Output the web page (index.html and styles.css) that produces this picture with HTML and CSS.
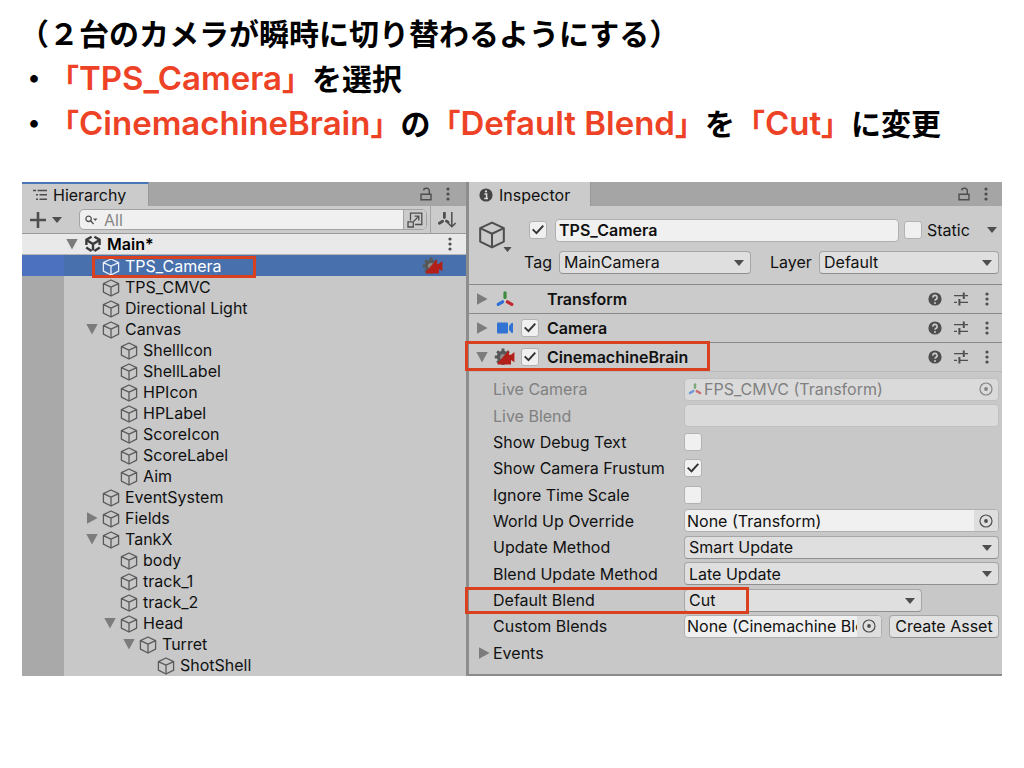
FILE: index.html
```html
<!DOCTYPE html>
<html lang="ja">
<head>
<meta charset="utf-8">
<meta name="viewport" content="width=device-width, initial-scale=1">
<title>TPS_Camera</title>
<link rel="stylesheet" href="styles.css">
</head>
<body>
<svg class="sprite" aria-hidden="true">
  <symbol id="cube" viewBox="0 0 18 18"><path d="M9 1 16.6 4.6V13.2L9 17 1.4 13.2V4.6ZM1.4 4.6 9 8.2 16.6 4.6M9 8.2V17" fill="none" stroke="currentColor" stroke-width="1.3" stroke-linejoin="round"/></symbol>
  <symbol id="down" viewBox="0 0 12 12"><path d="M.3 1H11.7L6 11.6Z" fill="currentColor"/></symbol>
  <symbol id="right" viewBox="0 0 12 12"><path d="M1 .3V11.7L11.6 6Z" fill="currentColor"/></symbol>
  <symbol id="caret" viewBox="0 0 10 6"><path d="M0 0H10L5 6Z" fill="currentColor"/></symbol>
  <symbol id="dots" viewBox="0 0 4 14"><circle cx="2" cy="2" r="1.6"/><circle cx="2" cy="7" r="1.6"/><circle cx="2" cy="12" r="1.6"/></symbol>
  <symbol id="lock" viewBox="0 0 12 14"><path d="M1 7.2H11V12.8H1ZM9.3 7V3.6A2.4 2.4 0 0 0 6.9 1.2H6A2.4 2.4 0 0 0 3.6 3.4" fill="none" stroke="currentColor" stroke-width="1.4"/></symbol>
  <symbol id="help" viewBox="0 0 14 14"><circle cx="7" cy="7" r="6.6" fill="currentColor"/><path d="M4.9 5.6A2.1 2.1 0 1 1 7.8 7.4Q7 7.8 7 8.8" fill="none" stroke="#cbcbcb" stroke-width="1.6"/><circle cx="7" cy="10.9" r="1" fill="#cbcbcb"/></symbol>
  <symbol id="preset" viewBox="0 0 14 14"><path d="M0 3.7H9M11 3.7H14M0 10.3H3M5 10.3H14" stroke="currentColor" stroke-width="1.3"/><path d="M9.8 .5V6.9M5.4 7.1V13.5" stroke="currentColor" stroke-width="2"/></symbol>
  <symbol id="axes" viewBox="0 0 18 16"><g stroke-width="3.2" stroke-linecap="round"><path d="M9 1.8V6.4" stroke="#3b8a3d"/><path d="M6.6 10.8 2.2 13.4" stroke="#2f6fd8"/><path d="M11.4 10.8 15.8 13.4" stroke="#c3272b"/></g></symbol>
  <symbol id="brain" viewBox="0 0 22 18"><g fill="#575757"><circle cx="9" cy="9" r="6.2"/><g stroke="#575757" stroke-width="3"><path d="M9 .6V17M.8 9H17M3.2 3.2 14.8 14.8M14.8 3.2 3.2 14.8"/></g></g><circle cx="9" cy="9" r="3" fill="#8a8a8a"/><path d="M3.6 16.6V15L15 2.2V6.8H17L20.4 4V14.2L17 12V16.6Z" fill="#b3201a"/></symbol>
  <symbol id="target" viewBox="0 0 14 14"><circle cx="7" cy="7" r="6" fill="none" stroke="currentColor" stroke-width="1.2"/><circle cx="7" cy="7" r="1.9" fill="currentColor"/></symbol>
</svg>

<header class="notes">
  <p>（２台のカメラが瞬時に切り替わるようにする）</p>
  <p>・<em>「<b>TPS_Camera</b>」</em>を選択</p>
  <p>・<em>「<b>CinemachineBrain</b>」</em>の<em>「<b>Default Blend</b>」</em>を<em>「<b>Cut</b>」</em>に変更</p>
</header>

<main class="editor">
  <section class="hierarchy" aria-label="Hierarchy">
    <div class="tabbar">
      <h2 class="tab active"><svg width="14" height="12" viewBox="0 0 14 12"><path d="M0 1.5H3M4.5 1.5H14M3 5.8H5M6.5 5.8H14M3 10.3H5M6.5 10.3H14" stroke="#4d4d4d" stroke-width="1.4"/></svg>Hierarchy</h2>
      <button class="icon lock" aria-label="Lock"><svg width="12" height="14"><use href="#lock"/></svg></button>
      <button class="icon" aria-label="Menu"><svg width="4" height="14"><use href="#dots"/></svg></button>
    </div>
    <div class="toolbar">
      <button class="icon add" aria-label="Create"><svg width="16" height="16" viewBox="0 0 16 16"><path d="M8 0V16M0 8H16" stroke="currentColor" stroke-width="2.6"/></svg><svg width="10" height="6"><use href="#caret"/></svg></button>
      <div class="search">
        <svg width="13" height="10" viewBox="0 0 13 10"><circle cx="3.6" cy="3.8" r="2.7" fill="none" stroke="#555" stroke-width="1.3"/><path d="M5.6 5.8 8.6 9" stroke="#555" stroke-width="1.4"/><path d="M8 3.4H12.6L10.3 6Z" fill="#555"/></svg>
        <input type="text" placeholder="All" aria-label="Search">
        <button class="icon" aria-label="Open search"><svg width="16" height="16" viewBox="0 0 16 16"><path d="M3.5 8.5V1.2H14.8V12.5H8M1 9.8H6.3V15H1ZM6.8 9.2 11.6 4.4M7.6 4.2H11.8V8.4" fill="none" stroke="currentColor" stroke-width="1.3"/></svg></button>
      </div>
      <button class="icon sort" aria-label="Sort"><svg width="18" height="16" viewBox="0 0 18 16"><path d="M6.4 1V5.6M4.6 9.2 1.4 11.2M8.4 9 10 10.2" stroke="currentColor" stroke-width="2.8" stroke-linecap="round"/><path d="M13.8 0V14.6M10 11 13.8 14.8 17.6 11" fill="none" stroke="currentColor" stroke-width="1.5"/></svg></button>
    </div>
    <div class="scene">
      <button class="fold" aria-label="Collapse"><svg width="12" height="12"><use href="#down"/></svg></button>
      <svg width="16" height="18" viewBox="0 0 16 18"><path d="M6.6 1.8 1.4 4.8V10M1.2 12.4 6.6 16M9.4 1.8 14.6 4.8V10M14.8 12.4 9.4 16" fill="none" stroke="#3a3a3a" stroke-width="2.4"/><path d="M1.8 5.2 8 9 14.2 5.2M8 9V15.6" fill="none" stroke="#3a3a3a" stroke-width="2.4"/></svg>
      <span class="scene-name">Main*</span>
      <button class="icon" aria-label="Scene menu"><svg width="4" height="14"><use href="#dots"/></svg></button>
    </div>
    <ul class="tree">
      <li class="l1 selected"><svg class="cube"><use href="#cube"/></svg>TPS_Camera<svg class="tag-icon" width="22" height="18"><use href="#brain"/></svg><i class="mark mark-item"></i></li>
      <li class="l1"><svg class="cube"><use href="#cube"/></svg>TPS_CMVC</li>
      <li class="l1"><svg class="cube"><use href="#cube"/></svg>Directional Light</li>
      <li class="l1"><button class="fold" aria-label="Collapse"><svg width="12" height="12"><use href="#down"/></svg></button><svg class="cube"><use href="#cube"/></svg>Canvas</li>
      <li class="l2"><svg class="cube"><use href="#cube"/></svg>ShellIcon</li>
      <li class="l2"><svg class="cube"><use href="#cube"/></svg>ShellLabel</li>
      <li class="l2"><svg class="cube"><use href="#cube"/></svg>HPIcon</li>
      <li class="l2"><svg class="cube"><use href="#cube"/></svg>HPLabel</li>
      <li class="l2"><svg class="cube"><use href="#cube"/></svg>ScoreIcon</li>
      <li class="l2"><svg class="cube"><use href="#cube"/></svg>ScoreLabel</li>
      <li class="l2"><svg class="cube"><use href="#cube"/></svg>Aim</li>
      <li class="l1"><svg class="cube"><use href="#cube"/></svg>EventSystem</li>
      <li class="l1"><button class="fold" aria-label="Expand"><svg width="12" height="12"><use href="#right"/></svg></button><svg class="cube"><use href="#cube"/></svg>Fields</li>
      <li class="l1"><button class="fold" aria-label="Collapse"><svg width="12" height="12"><use href="#down"/></svg></button><svg class="cube"><use href="#cube"/></svg>TankX</li>
      <li class="l2"><svg class="cube"><use href="#cube"/></svg>body</li>
      <li class="l2"><svg class="cube"><use href="#cube"/></svg>track_1</li>
      <li class="l2"><svg class="cube"><use href="#cube"/></svg>track_2</li>
      <li class="l2"><button class="fold" aria-label="Collapse"><svg width="12" height="12"><use href="#down"/></svg></button><svg class="cube"><use href="#cube"/></svg>Head</li>
      <li class="l3"><button class="fold" aria-label="Collapse"><svg width="12" height="12"><use href="#down"/></svg></button><svg class="cube"><use href="#cube"/></svg>Turret</li>
      <li class="l4"><svg class="cube"><use href="#cube"/></svg>ShotShell</li>
    </ul>
  </section>

  <section class="inspector" aria-label="Inspector">
    <div class="tabbar">
      <h2 class="tab"><svg width="14" height="14" viewBox="0 0 14 14"><circle cx="7" cy="7" r="6.6" fill="#444"/><path d="M5.4 6H7.6V10.6M5.2 10.6H9" fill="none" stroke="#ddd" stroke-width="1.5"/><circle cx="7" cy="3.4" r="1.1" fill="#ddd"/></svg>Inspector</h2>
      <button class="icon lock" aria-label="Lock"><svg width="12" height="14"><use href="#lock"/></svg></button>
      <button class="icon" aria-label="Menu"><svg width="4" height="14"><use href="#dots"/></svg></button>
    </div>

    <div class="object">
      <button class="icon object-icon" aria-label="Icon"><svg width="28" height="28" viewBox="0 0 18 18"><use href="#cube"/></svg><svg class="object-caret" width="9" height="5" viewBox="0 0 10 6"><use href="#caret"/></svg></button>
      <div class="object-fields">
        <div class="object-row">
          <input class="check" type="checkbox" aria-label="Active" checked>
          <input class="field name" type="text" aria-label="Name" value="TPS_Camera">
          <input class="check" type="checkbox" id="static">
          <label class="static" for="static">Static</label>
          <button class="icon" aria-label="Static options"><svg width="10" height="6"><use href="#caret"/></svg></button>
        </div>
        <div class="object-row">
          <label class="tag" for="tag">Tag</label>
          <span class="drop grow"><select id="tag"><option>MainCamera</option></select><svg width="10" height="6"><use href="#caret"/></svg></span>
          <label class="layer" for="layer">Layer</label>
          <span class="drop drop-layer"><select id="layer"><option>Default</option></select><svg width="10" height="6"><use href="#caret"/></svg></span>
        </div>
      </div>
    </div>

    <div class="component">
      <button class="fold" aria-label="Expand"><svg width="12" height="12"><use href="#right"/></svg></button>
      <span class="kind"><svg width="18" height="16"><use href="#axes"/></svg></span>
      <span class="slot"></span>
      <h3>Transform</h3>
      <button class="icon" aria-label="Help"><svg width="14" height="14"><use href="#help"/></svg></button><button class="icon" aria-label="Presets"><svg width="14" height="14"><use href="#preset"/></svg></button><button class="icon" aria-label="Menu"><svg width="4" height="14"><use href="#dots"/></svg></button>
    </div>
    <div class="component">
      <button class="fold" aria-label="Expand"><svg width="12" height="12"><use href="#right"/></svg></button>
      <span class="kind"><svg width="18" height="12" viewBox="0 0 18 12"><rect x="1" y=".5" width="11" height="11" rx="1" fill="#3273d3"/><path d="M13 4 15.4 1.2Q17 .2 17 2V10Q17 11.8 15.4 10.8L13 8Z" fill="#3273d3"/></svg></span>
      <span class="slot"><input class="check" type="checkbox" aria-label="Camera enabled" checked></span>
      <h3>Camera</h3>
      <button class="icon" aria-label="Help"><svg width="14" height="14"><use href="#help"/></svg></button><button class="icon" aria-label="Presets"><svg width="14" height="14"><use href="#preset"/></svg></button><button class="icon" aria-label="Menu"><svg width="4" height="14"><use href="#dots"/></svg></button>
    </div>
    <div class="component">
      <button class="fold" aria-label="Collapse"><svg width="12" height="12"><use href="#down"/></svg></button>
      <span class="kind"><svg width="22" height="18"><use href="#brain"/></svg></span>
      <span class="slot"><input class="check" type="checkbox" aria-label="CinemachineBrain enabled" checked></span>
      <h3>CinemachineBrain</h3>
      <button class="icon" aria-label="Help"><svg width="14" height="14"><use href="#help"/></svg></button><button class="icon" aria-label="Presets"><svg width="14" height="14"><use href="#preset"/></svg></button><button class="icon" aria-label="Menu"><svg width="4" height="14"><use href="#dots"/></svg></button>
      <i class="mark mark-component"></i>
    </div>

    <div class="props">
      <div class="prop disabled"><label for="live-camera">Live Camera</label>
        <span class="field ref"><svg width="14" height="12" viewBox="0 0 18 16"><use href="#axes"/></svg><input id="live-camera" type="text" value="FPS_CMVC (Transform)" disabled><button class="icon pick" aria-label="Select" disabled><svg width="14" height="14"><use href="#target"/></svg></button></span></div>
      <div class="prop disabled"><label for="live-blend">Live Blend</label><input class="field" id="live-blend" type="text" disabled></div>
      <div class="prop"><label for="debug">Show Debug Text</label><input class="check" id="debug" type="checkbox"></div>
      <div class="prop"><label for="frustum">Show Camera Frustum</label><input class="check" id="frustum" type="checkbox" checked></div>
      <div class="prop"><label for="ignore">Ignore Time Scale</label><input class="check" id="ignore" type="checkbox"></div>
      <div class="prop"><label for="world">World Up Override</label>
        <span class="field ref"><input id="world" type="text" value="None (Transform)"><button class="icon pick" aria-label="Select"><svg width="14" height="14"><use href="#target"/></svg></button></span></div>
      <div class="prop"><label for="update">Update Method</label><span class="drop grow"><select id="update"><option>Smart Update</option></select><svg width="10" height="6"><use href="#caret"/></svg></span></div>
      <div class="prop"><label for="blend-update">Blend Update Method</label><span class="drop grow"><select id="blend-update"><option>Late Update</option></select><svg width="10" height="6"><use href="#caret"/></svg></span></div>
      <div class="prop"><label for="blend">Default Blend</label><span class="drop drop-blend"><select id="blend"><option>Cut</option></select><svg width="10" height="6"><use href="#caret"/></svg></span><i class="mark mark-prop"></i></div>
      <div class="prop"><label for="custom">Custom Blends</label>
        <span class="field ref"><input id="custom" type="text" value="None (Cinemachine Blender Settings)"><button class="icon pick" aria-label="Select"><svg width="14" height="14"><use href="#target"/></svg></button></span><button class="create">Create Asset</button></div>
      <div class="prop"><button class="fold" aria-label="Expand"><svg width="12" height="12"><use href="#right"/></svg></button><span>Events</span></div>
    </div>
  </section>
</main>
</body>
</html>
```

FILE: styles.css
```css
* { box-sizing: border-box; }

body {
  margin: 0;
  background: #fff;
  color: #111;
  font: 16px/20px Inter, "Noto Sans CJK JP", sans-serif;
}

h2, h3, p, ul { margin: 0; padding: 0; font-size: inherit; }
svg { display: block; flex: none; }
button, input, select { font: inherit; color: inherit; margin: 0; }
button { cursor: pointer; }
.sprite { position: absolute; width: 0; height: 0; }

/* Notes above the editor */
.notes {
  padding: 10px 19px 37px;
  color: #000;
  font: 700 30px/45px "Noto Sans CJK JP", sans-serif;
  text-spacing-trim: space-all;
}
.notes em { color: #ee4226; font-style: normal; }
.notes b { font: 600 33px/33px Inter, sans-serif; }

/* Editor window */
.editor {
  display: grid;
  grid-template-columns: 444fr 536fr;
  margin: 0 22px 40px;
  background: #c8c8c8;
}
.hierarchy, .inspector { display: flex; flex-direction: column; min-width: 0; }
.inspector { border-left: 3px solid #8d8d8d; }

.icon, .fold {
  display: flex;
  align-items: center;
  justify-content: center;
  flex: none;
  padding: 0;
  border: 0;
  background: none;
  color: #4e4e4e;
  fill: #4e4e4e;
}
.fold { width: 12px; height: 12px; color: #7c7c7c; }

.tabbar {
  display: flex;
  align-items: center;
  gap: 14px;
  height: 24px;
  padding-right: 14px;
  background: #a5a5a5;
}
.hierarchy .tabbar { padding-right: 16px; }
.tab {
  display: flex;
  align-items: center;
  align-self: stretch;
  gap: 6px;
  margin-right: auto;
  padding: 2px 20px 0 10px;
  border-right: 1px solid #999;
  background: #cbcbcb;
  font-weight: 400;
}
.tab.active { border-top: 2px solid #4a76b8; padding: 0 22px 0 11px; }

.toolbar {
  display: flex;
  align-items: center;
  height: 28px;
  padding-left: 8px;
  border-bottom: 1px solid #9a9a9a;
  background: #cbcbcb;
}
.add { gap: 6px; margin-right: 17px; }
.search {
  display: flex;
  flex: 1;
  align-items: center;
  gap: 6px;
  height: 21px;
  min-width: 0;
  padding-left: 5px;
  border: 1px solid #a3a3a3;
  border-radius: 5px;
  background: #f0f0f0;
  overflow: hidden;
}
.search input { flex: 1; min-width: 0; padding: 0; border: 0; background: none; outline: 0; }
.search input::placeholder { color: #858585; opacity: 1; }
.search .icon { width: 23px; height: 20px; border-left: 1px solid #a3a3a3; background: #cbcbcb; }
.sort { width: 36px; height: 27px; margin-left: 3px; padding-right: 3px; border-left: 1px solid #a3a3a3; }

.scene {
  display: flex;
  align-items: center;
  height: 21px;
  padding: 0 14px 0 44px;
  border-bottom: 1px solid #b5b5b5;
  background: #e9e9e9;
  color: #000;
  font-weight: 600;
}
.scene .fold { margin-right: 7px; }
.scene-name { flex: 1; margin-left: 6px; }

.tree {
  flex: 1;
  padding-bottom: 1px;
  background: linear-gradient(90deg, #a9a9a9 42px, #c8c8c8 42px);
  list-style: none;
}
.tree li { position: relative; display: flex; align-items: center; height: 21px; }
.tree .l1 { padding-left: 80px; }
.tree .l2 { padding-left: 98px; }
.tree .l3 { padding-left: 117px; }
.tree .l4 { padding-left: 135px; }
.tree .fold { margin: 0 4px 0 -16px; }
.cube { width: 18px; height: 18px; margin: 2px 5px 0 0; color: #5b5b5b; }
.selected { background: linear-gradient(90deg, #4b71bf 42px, #4870ad 42px); color: #fff; }
.selected .cube { color: #e8eefa; }
.tag-icon { margin: 0 22px 0 auto; }

/* Red outlines over the items to change */
.mark { position: absolute; z-index: 1; border: 3px solid #d8401f; pointer-events: none; }
.mark-item { top: 1px; left: 70px; width: 164px; height: 22px; }
.mark-component { top: -2px; left: -4px; width: 245px; height: 30px; }
.mark-prop { top: 0; left: -4px; width: 284px; height: 27px; }

/* Form controls */
.check {
  display: grid;
  place-items: center;
  flex: none;
  width: 18px;
  height: 18px;
  appearance: none;
  border: 1px solid #b2b2b2;
  border-radius: 3px;
  background: #f0f0f0;
}
.check:checked::before {
  content: "";
  width: 12px;
  height: 10px;
  background: #333;
  clip-path: polygon(0 50%, 12% 38%, 36% 68%, 88% 0, 100% 12%, 38% 96%);
}
.field {
  flex: 1;
  height: 23px;
  min-width: 0;
  padding: 0 3px;
  border: 1px solid #b0b0b0;
  border-radius: 4px;
  background: #f0f0f0;
}
.ref { display: flex; align-items: center; padding: 0 0 0 2px; overflow: hidden; }
.ref input { flex: 1; min-width: 0; height: 21px; padding: 0; border: 0; background: none; }
.pick { width: 24px; height: 21px; background: #dedede; }
.drop { position: relative; display: flex; min-width: 0; }
.drop select {
  width: 100%;
  height: 23px;
  padding: 0 24px 0 4px;
  appearance: none;
  border: 1px solid #a6a6a6;
  border-bottom-color: #8f8f8f;
  border-radius: 4px;
  background: #dfdfdf;
}
.drop svg { position: absolute; top: 9px; right: 7px; color: #4e4e4e; pointer-events: none; }
.grow { flex: 1; }

/* Object header */
.object { display: flex; height: 78px; padding: 12px 3px 0 8px; background: #cbcbcb; }
.object-icon { position: relative; width: 30px; height: 34px; margin-right: 17px; }
.object-caret { position: absolute; right: -5px; bottom: 0; }
.object-fields { display: flex; flex: 1; flex-direction: column; gap: 8px; min-width: 0; }
.object-row { display: flex; align-items: center; height: 24px; padding-left: 5px; }
.name { margin: 0 5px 0 8px; font-weight: 600; }
.static { flex: none; width: 59px; margin-left: 5px; }
.object-row > .icon { width: 10px; margin: 0 2px 0 1px; }
.tag { flex: none; width: 35px; margin-left: -5px; }
.layer { flex: none; width: 49px; margin-left: 19px; }
.drop-layer { flex: none; width: 180px; }

/* Component headers */
.component {
  position: relative;
  display: flex;
  align-items: center;
  height: 29px;
  padding: 0 13px 0 7px;
  border-top: 1px solid #8a8a8a;
  background: #cbcbcb;
}
.component h3 { flex: 1; font-weight: 600; }
.kind { display: flex; justify-content: center; width: 22px; margin: 0 3px 0 6px; }
.slot { width: 26px; margin-left: 2px; }
.component .icon + .icon { margin-left: 12px; }
.component .icon:last-of-type { margin-left: 17px; }

.props {
  display: flex;
  flex: 1;
  flex-direction: column;
  padding: 4px 0 8px;
  border-top: 1px solid #bababa;
  border-bottom: 2px solid #8a8a8a;
}
.prop { position: relative; display: flex; flex: 1; align-items: center; padding: 0 3px 0 24px; }
.prop > label { flex: none; width: 191px; }
.prop .fold { margin: 0 3px 0 -15px; }
.disabled { color: #808080; }
.disabled .field { border-color: #c0c0c0; background: #dadada; }
.disabled .ref > svg, .disabled .pick { opacity: .6; }
.disabled .ref > svg { margin: 0 2px 0 1px; }
.disabled .pick { background: none; }
.drop-blend { flex: 0 1 238px; }
.create {
  flex: none;
  width: 110px;
  height: 23px;
  margin-left: 7px;
  padding: 0;
  border: 1px solid #a6a6a6;
  border-bottom-color: #8f8f8f;
  border-radius: 4px;
  background: #e2e2e2;
  white-space: nowrap;
}
```
